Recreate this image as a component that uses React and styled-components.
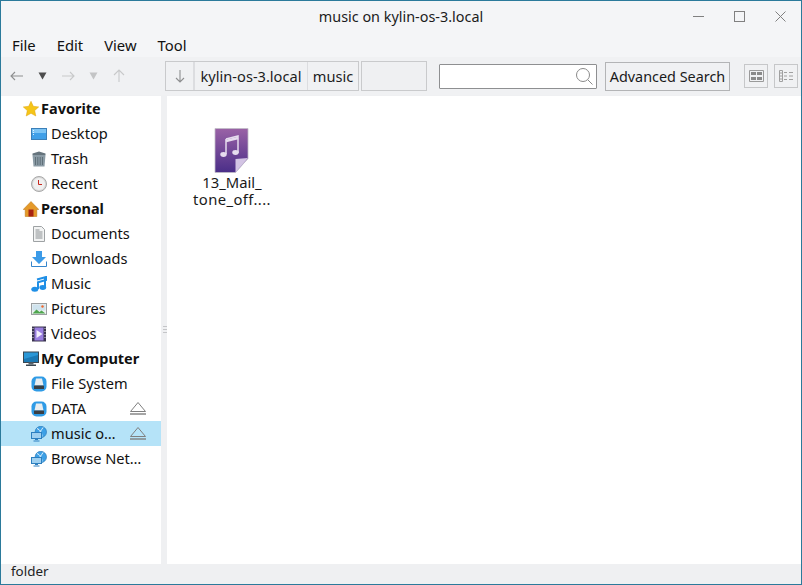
import React from 'react'
import styled, { createGlobalStyle } from 'styled-components'

const Global = createGlobalStyle`
  html, body { margin: 0; padding: 0; background: #fff; }
  * { box-sizing: border-box; }
`

const Window = styled.div`
  width: 802px; height: 585px; display: flex; flex-direction: column;
  border: 1px solid #2b7a9b; background: #f4f5f7;
  font-family: "Noto Sans", "Open Sans", sans-serif; font-size: 14.6px; color: #111;
  overflow: hidden;
`
const TitleBar = styled.div`
  height: 31px; flex: none; position: relative; display: flex; align-items: center; justify-content: center;
  font-size: 14.4px; color: #1c1c1c; padding-bottom: 1px;
`
const WinButtons = styled.div`
  position: absolute; right: 15px; top: 10px; display: flex; gap: 30px;
`
const MenuBar = styled.div`
  height: 25px; flex: none; display: flex; padding-left: 11px; gap: 21px; align-items: center;
`
const MenuItem = styled.span`font-size: 14.8px;`
const Toolbar = styled.div`
  height: 38px; flex: none; background: #f0f1f3; display: flex; align-items: center; padding-left: 8px;
`
const NavIcon = styled.span`
  display: flex; width: ${p => p.$w}px; justify-content: center; align-items: center;
`
const PathBar = styled.div`
  margin-left: 38px; width: 194px; height: 30px; display: flex; align-items: stretch;
  border: 1px solid #c9cacc; background: #f0f1f3;
`
const PathRest = styled.div`
  margin-left: 2px; width: 66px; height: 30px; border: 1px solid #c9cacc; background: #eff0f2;
`
const PathArrow = styled.div`
  width: 29px; display: flex; align-items: center; justify-content: center; border-right: 2px solid #dcdde0; flex: none;
`
const PathCrumb = styled.div`
  display: flex; align-items: center; justify-content: center; flex: none; width: ${p => p.$w}px;
  border-right: ${p => p.$last ? 'none' : '1px solid #dcdde0'}; white-space: nowrap; font-size: 14.6px; color: #1d1d1d;
`
const SearchBox = styled.div`
  margin-left: 12px; width: 158px; height: 25px; background: #fff; border: 1px solid #8e8f91; border-radius: 1px;
  display: flex; align-items: center; justify-content: flex-end; padding-right: 2px;
`
const AdvancedButton = styled.div`
  margin-left: 8px; width: 125px; height: 29px; border: 1px solid #b3b4b6; display: flex; align-items: center; justify-content: center;
  font-size: 14.4px; color: #1a1a1a; white-space: nowrap;
`
const ViewButton = styled.div`
  margin-left: ${p => p.$gap}px; width: 24px; height: 24px; border: 1px solid #c6c7c9; display: flex; align-items: center; justify-content: center;
`
const Body = styled.div`
  flex: 1; min-height: 0; display: flex; background: #eff0f2;
`
const Sidebar = styled.div`
  width: 160px; background: #fff; flex: none; margin-top: 1px;
`
const Row = styled.div`
  height: 25px; display: flex; align-items: center; position: relative;
  padding-left: ${p => p.$head ? 22 : 30}px;
  background: ${p => p.$active ? '#b5e3f8' : 'transparent'};
  font-weight: ${p => p.$head ? 700 : 400};
  color: #111; white-space: nowrap;
`
const RowLabel = styled.span`
  margin-left: ${p => p.$head ? 2 : 4}px;
  margin-bottom: 2px;
  font-size: ${p => p.$head ? 14.5 : 14.6}px;
`
const Eject = styled.span`
  position: absolute; left: 128px; top: 5px; display: flex;
`
const Splitter = styled.div`
  width: 6px; flex: none; display: flex; align-items: center; justify-content: center;
`
const Grip = styled.div`
  width: 4px; height: 8px; margin-top: 1px; margin-left: 1px;
  background: repeating-linear-gradient(#c4c5c8 0 1px, transparent 1px 3px);
`
const Content = styled.div`
  flex: 1; background: #fff; margin-top: 1px; padding: 32px 0 0 26px;
`
const FileItem = styled.div`
  width: 78px; display: flex; flex-direction: column; align-items: center;
`
const FileName = styled.div`
  margin-top: 1px; text-align: center; font-size: 14.8px; line-height: 17px; color: #1a1a1a; white-space: nowrap;
`
const FileLine = styled.span`
  letter-spacing: ${p => p.$spread ? 0.4 : 0}px;
`
const StatusBar = styled.div`
  height: 20px; flex: none; background: #eff0f2; padding: 0 0 7px 10px; font-size: 13.4px; display: flex; align-items: center; color: #222;
`

const Arrow = ({ d, color }) => (
  <svg width="16" height="16" viewBox="0 0 16 16" fill="none" stroke={color} strokeWidth="1.1">
    <path d={d} />
  </svg>
)
const Tri = ({ color }) => (
  <svg width="9" height="8" viewBox="0 0 9 8"><path d="M0.500 0.500h8L4.500 7.500z" fill={color} /></svg>
)

const I = ({ children }) => <svg width="16" height="16" viewBox="0 0 16 16" style={{ flex: 'none' }}>{children}</svg>

const Star = () => <I><path d="M8 0.300l2.300 5 5.400.6-4 3.700 1.100 5.400L8 12.300 3.200 15l1.100-5.400-4-3.700 5.400-.6z" fill="#f5c518" stroke="#e0a30f" strokeWidth=".5" /></I>
const Desktop = () => <I><rect x="0.500" y="2.500" width="15" height="11" fill="#3f9fe8" stroke="#3b7fb8" /><rect x="1" y="3" width="14" height="4" fill="#7cc4f5" /><path d="M2.500 4v.8M2.500 6v.8M2.500 8v.8" stroke="#fff" /></I>
const Trash = () => <I><path d="M1.500 2.500l6.500-2 6.500 2v1.500h-13z" fill="#66747d" /><path d="M1.500 4h13l-1 11.500H2.500z" fill="#8b9ba5" /><path d="M4.500 6v8M6.800 6v8M9.200 6v8M11.500 6v8" stroke="#5f6f78" /></I>
const Clock = () => <I><circle cx="8" cy="8" r="7.500" fill="#d9d9d9" stroke="#a8a8a8" /><circle cx="8" cy="8" r="6" fill="#f0f0f0" /><path d="M7.500 4v4.500h3.500" fill="none" stroke="#c8281e" strokeWidth="1" /></I>
const House = () => <I><path d="M8 0.500L15.800 8.500h-2V15.500H2.200V8.500h-2z" fill="#e59a2a" stroke="#b87414" strokeWidth=".5" /><rect x="5.500" y="8.500" width="5" height="7" fill="#a82312" /></I>
const Doc = () => <I><path d="M2.500 .5h8l3 3v12h-11z" fill="#f3f4f4" stroke="#9ea2a4" /><path d="M4.500 4h4M4.500 6h7M4.500 8h7M4.500 10h7M4.500 12h7" stroke="#8b9093" /></I>
const Download = () => <I><path d="M5 0h6v6h4l-7 7-7-7h4z" fill="#3c9be8" /><path d="M0.500 10.500v5h15v-5" fill="none" stroke="#3585cc" /></I>
const Note = () => <I><path d="M6 3.500L15 1v3L7 6.200V13" stroke="#1f8fe6" strokeWidth="2" fill="none" /><path d="M14 1v10" stroke="#1f8fe6" strokeWidth="2" /><ellipse cx="3.800" cy="13.200" rx="3.500" ry="2.500" fill="#1f8fe6" /><ellipse cx="11.800" cy="11.500" rx="3.400" ry="2.400" fill="#1f8fe6" /></I>
const Picture = () => <I><rect x="0.500" y="2.500" width="15" height="11" fill="#eef3f2" stroke="#9b9fa1" /><rect x="1.500" y="3.500" width="13" height="6" fill="#cfe3ee" /><path d="M1.500 12.500l4-4 3 2.500 2-1.500 4 3z" fill="#4fa64f" /><circle cx="11.500" cy="5.500" r="1.200" fill="#f0672c" /></I>
const Video = () => <I><rect x="1" y="0.500" width="14" height="15" fill="#3a3450" /><rect x="3.500" y="1.500" width="9" height="13" fill="#9a7fe0" /><path d="M5.500 4l6 4-6 4z" fill="#f2eefc" /><path d="M2 2v1M2 5v1M2 8v1M2 11v1M14 2v1M14 5v1M14 8v1M14 11v1" stroke="#ddd" /></I>
const Computer = () => <I><rect x="0.500" y="1" width="15" height="10.500" fill="#2b97d6" stroke="#3a4650" /><path d="M1 8l14-4v7H1z" fill="#1c79b4" /><rect x="5.500" y="11.500" width="5" height="2" fill="#59646c" /><rect x="3" y="13.500" width="10" height="1.500" fill="#3a4650" /></I>
const Drive = () => <I><rect x="0.500" y="0.500" width="15" height="15" rx="5" fill="#2f9be6" /><path d="M5 2.500h6l1.500 7h-9z" fill="#e9edef" /><rect x="3" y="9.500" width="10" height="3.500" rx=".5" fill="#3a3f44" /></I>
const Net = () => <I><circle cx="9.800" cy="6" r="5.700" fill="#3da0e6" stroke="#1f6fb0" strokeWidth=".6" /><path d="M6 2.500c3 1 5 4 5 8M12 1.500c-2 3-3.500 6-7 7" stroke="#e3f3fd" strokeWidth="1" fill="none" /><rect x="0.500" y="6.500" width="10" height="6" fill="#9fd0f0" stroke="#2d7fbf" /><path d="M4 13.500h3M2.500 15h6" stroke="#2d7fbf" strokeWidth="1.200" /></I>

const EjectIcon = () => (
  <svg width="18" height="15" viewBox="0 0 18 15" fill="none" stroke="#7f7f7f">
    <path d="M9 1.500L16.500 10.500H1.500z" />
    <path d="M1 13h16" strokeWidth="1.400" />
  </svg>
)

const items = [
  { head: true, label: 'Favorite', icon: <Star /> },
  { label: 'Desktop', icon: <Desktop /> },
  { label: 'Trash', icon: <Trash /> },
  { label: 'Recent', icon: <Clock /> },
  { head: true, label: 'Personal', icon: <House /> },
  { label: 'Documents', icon: <Doc /> },
  { label: 'Downloads', icon: <Download /> },
  { label: 'Music', icon: <Note /> },
  { label: 'Pictures', icon: <Picture /> },
  { label: 'Videos', icon: <Video /> },
  { head: true, label: 'My Computer', icon: <Computer /> },
  { label: 'File System', icon: <Drive /> },
  { label: 'DATA', icon: <Drive />, eject: true },
  { label: 'music o…', icon: <Net />, eject: true, active: true },
  { label: 'Browse Net…', icon: <Net /> },
]

const App = () => (
  <>
    <Global />
    <Window>
      <TitleBar>
        music on kylin-os-3.local
        <WinButtons>
          <svg width="11" height="11" viewBox="0 0 11 11" stroke="#808080" fill="none"><path d="M0 5.500h11" /></svg>
          <svg width="11" height="11" viewBox="0 0 11 11" stroke="#808080" fill="none"><rect x="0.500" y="0.500" width="10" height="10" /></svg>
          <svg width="11" height="11" viewBox="0 0 11 11" stroke="#808080" fill="none"><path d="M0.500 0.500l10 10M10.500 0.500l-10 10" /></svg>
        </WinButtons>
      </TitleBar>
      <MenuBar>
        <MenuItem>File</MenuItem>
        <MenuItem>Edit</MenuItem>
        <MenuItem>View</MenuItem>
        <MenuItem>Tool</MenuItem>
      </MenuBar>
      <Toolbar>
        <NavIcon $w={16}><Arrow color="#8e8f90" d="M14 8H2M6 4L2 8l4 4" /></NavIcon>
        <NavIcon $w={35}><Tri color="#4d4d4d" /></NavIcon>
        <NavIcon $w={16}><Arrow color="#c8c9ca" d="M2 8h12M10 4l4 4-4 4" /></NavIcon>
        <NavIcon $w={35}><Tri color="#c3c4c5" /></NavIcon>
        <NavIcon $w={16}><Arrow color="#c8c9ca" d="M8 14V2M3 7l5-5 5 5" /></NavIcon>
        <PathBar>
          <PathArrow><Arrow color="#8e8f90" d="M8 2v12M4 10l4 4 4-4" /></PathArrow>
          <PathCrumb $w={113}>kylin-os-3.local</PathCrumb>
          <PathCrumb $w={50} $last>music</PathCrumb>
        </PathBar>
        <PathRest />
        <SearchBox>
          <svg width="19" height="19" viewBox="0 0 19 19" fill="none" stroke="#8a8a8a">
            <circle cx="8" cy="8" r="6.500" />
            <path d="M12.800 12.800l4.700 4.700" />
          </svg>
        </SearchBox>
        <AdvancedButton>Advanced Search</AdvancedButton>
        <ViewButton $gap={14}>
          <svg width="15" height="12" viewBox="0 0 15 12" fill="#8a8a8a">
            <path d="M0.500 .5h14v11H.5z" fill="none" stroke="#9a9a9a" />
            <rect x="2" y="2" width="5" height="3" /><rect x="8" y="2" width="5" height="3" />
            <rect x="2" y="7" width="5" height="3" /><rect x="8" y="7" width="5" height="3" />
          </svg>
        </ViewButton>
        <ViewButton $gap={6}>
          <svg width="15" height="12" viewBox="0 0 15 12" fill="none" stroke="#a0a0a0">
            <path d="M0.500 .5h3v11h-3zM1 3h2M1 6h2M1 9h2M5 2.500h3M10 2.500h4M5 6h3M10 6h4M5 9.500h3M10 9.500h4" />
          </svg>
        </ViewButton>
      </Toolbar>
      <Body>
        <Sidebar>
          {items.map(it => (
            <Row key={it.label} $head={it.head} $active={it.active}>
              {it.icon}
              <RowLabel $head={it.head}>{it.label}</RowLabel>
              {it.eject && <Eject><EjectIcon /></Eject>}
            </Row>
          ))}
        </Sidebar>
        <Splitter><Grip /></Splitter>
        <Content>
          <FileItem>
            <svg width="36" height="45" viewBox="0 0 36 45" style={{ display: 'block' }}>
              <defs>
                <linearGradient id="pg" x1="0" y1="0" x2="0" y2="1">
                  <stop offset="0" stopColor="#9a62a6" />
                  <stop offset="1" stopColor="#4a2e88" />
                </linearGradient>
              </defs>
              <path d="M1 .5h33v30L21.500 44.500H1z" fill="url(#pg)" stroke="#c0bdc6" strokeWidth="0.800" />
              <path d="M21.500 44.500V31l12.500-1z" fill="#d3c4e4" />
              <path d="M12 11l12-3v17" fill="none" stroke="#e6dcee" strokeWidth="1.500" />
              <path d="M12 11v15" fill="none" stroke="#e6dcee" strokeWidth="1.500" />
              <path d="M12 13l12-3" stroke="#e6dcee" strokeWidth="2.500" />
              <ellipse cx="9.500" cy="26.500" rx="3.200" ry="2.400" fill="#e6dcee" />
              <ellipse cx="21.500" cy="24.500" rx="3.200" ry="2.400" fill="#e6dcee" />
            </svg>
            <FileName>13_Mail_<br /><FileLine $spread>tone_off....</FileLine></FileName>
          </FileItem>
        </Content>
      </Body>
      <StatusBar>folder</StatusBar>
    </Window>
  </>
)

export default App
